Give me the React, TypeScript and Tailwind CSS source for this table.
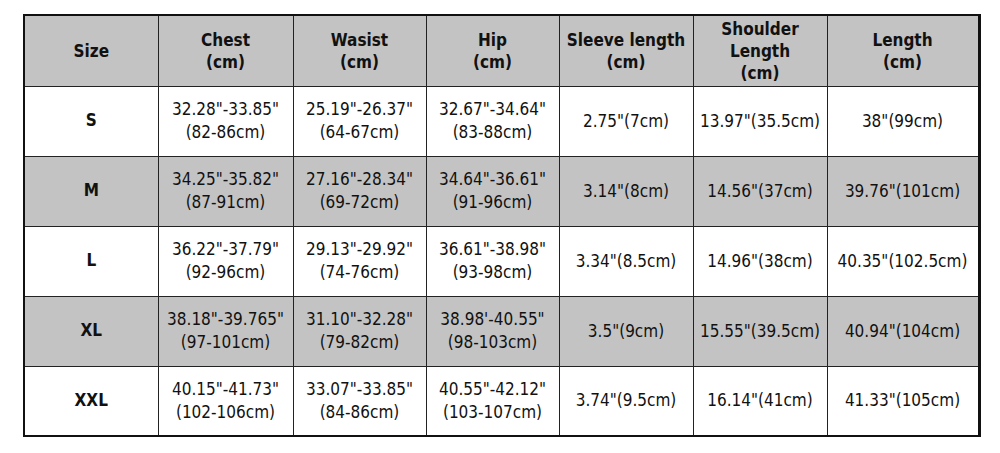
const headers = [
  ["Size"],
  ["Chest", "(cm)"],
  ["Wasist", "(cm)"],
  ["Hip", "(cm)"],
  ["Sleeve length", "(cm)"],
  ["Shoulder", "Length", "(cm)"],
  ["Length", "(cm)"],
];

const rows = [
  ["S", ["32.28\"-33.85\"", "(82-86cm)"], ["25.19\"-26.37\"", "(64-67cm)"], ["32.67\"-34.64\"", "(83-88cm)"], "2.75\"(7cm)", "13.97\"(35.5cm)", "38\"(99cm)"],
  ["M", ["34.25\"-35.82\"", "(87-91cm)"], ["27.16\"-28.34\"", "(69-72cm)"], ["34.64\"-36.61\"", "(91-96cm)"], "3.14\"(8cm)", "14.56\"(37cm)", "39.76\"(101cm)"],
  ["L", ["36.22\"-37.79\"", "(92-96cm)"], ["29.13\"-29.92\"", "(74-76cm)"], ["36.61\"-38.98\"", "(93-98cm)"], "3.34\"(8.5cm)", "14.96\"(38cm)", "40.35\"(102.5cm)"],
  ["XL", ["38.18\"-39.765\"", "(97-101cm)"], ["31.10\"-32.28\"", "(79-82cm)"], ["38.98'-40.55\"", "(98-103cm)"], "3.5\"(9cm)", "15.55\"(39.5cm)", "40.94\"(104cm)"],
  ["XXL", ["40.15\"-41.73\"", "(102-106cm)"], ["33.07\"-33.85\"", "(84-86cm)"], ["40.55\"-42.12\"", "(103-107cm)"], "3.74\"(9.5cm)", "16.14\"(41cm)", "41.33\"(105cm)"],
];

const widths = ["w-[134px]", "w-[135px]", "w-[133px]", "w-[133px]", "w-[134px]", "w-[134px]", "w-[152px]"];

export default function App() {
  return (
    <div className="w-[1000px] h-[453px] bg-white pl-[23px] pt-[14px] font-['DejaVu_Sans_Condensed','DejaVu_Sans',sans-serif] text-[#111]">
      <table className="table-fixed border-collapse border-2 border-r-[3px] border-[#111] w-[956px]">
        <thead>
          <tr className="h-[71px] bg-[#c3c3c3]">
            {headers.map((h, i) => (
              <th key={i} className={`${widths[i]} border border-[#222] text-[17px] font-bold leading-[22px] text-center p-0`}>
                {h.map((line, j) => (
                  <div key={j}>{line}</div>
                ))}
              </th>
            ))}
          </tr>
        </thead>
        <tbody>
          {rows.map((r, i) => (
            <tr key={i} className={`h-[70px] ${i % 2 === 1 ? "bg-[#c3c3c3]" : "bg-white"}`}>
              {r.map((c, j) => (
                <td
                  key={j}
                  className={`border border-[#222] text-center p-0 ${
                    j === 0 ? "text-[17px] font-bold" : "text-[17px] leading-[23px]"
                  }`}
                >
                  {Array.isArray(c) ? c.map((line, k) => <div key={k}>{line}</div>) : c}
                </td>
              ))}
            </tr>
          ))}
        </tbody>
      </table>
    </div>
  );
}
